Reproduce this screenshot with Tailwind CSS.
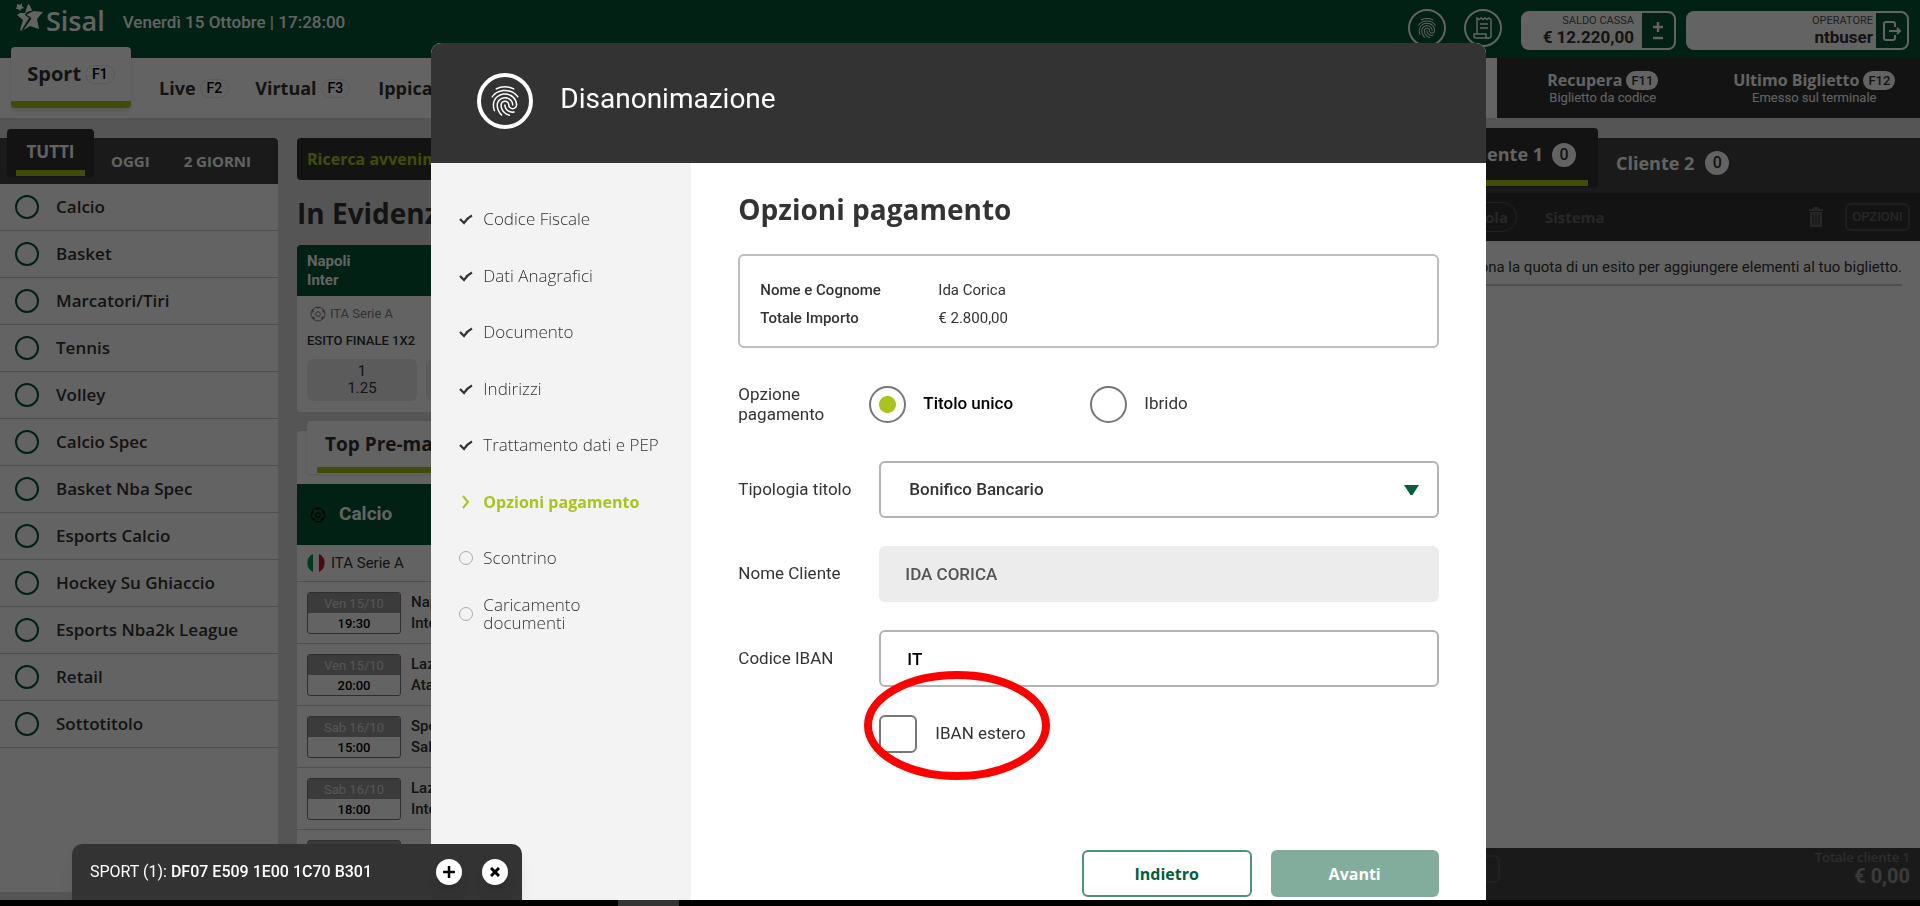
<!DOCTYPE html>
<html lang="it">
<head>
<meta charset="utf-8">
<meta name="viewport" content="width=device-width, initial-scale=1">
<title>Sisal - Disanonimazione</title>
<script src="https://cdn.jsdelivr.net/npm/@tailwindcss/browser@4"></script>
</head>
<body class="h-screen overflow-hidden bg-black font-['Roboto',sans-serif] text-[#333]">
<svg class="hidden" aria-hidden="true">
  <symbol id="finger" viewBox="0 0 24 24"><path fill="currentColor" d="M17.81 4.47c-.08 0-.16-.02-.23-.06C15.66 3.42 14 3 12.01 3c-1.98 0-3.86.47-5.57 1.41-.24.13-.54.04-.68-.2-.13-.24-.04-.55.2-.68C7.82 2.52 9.86 2 12.01 2c2.13 0 3.99.47 6.03 1.52.25.13.34.43.21.67-.09.18-.26.28-.44.28zM3.5 9.72c-.1 0-.2-.03-.29-.09-.23-.16-.28-.47-.12-.7.99-1.4 2.25-2.5 3.75-3.27C9.98 4.04 14 4.03 17.15 5.65c1.5.77 2.76 1.86 3.75 3.25.16.22.11.54-.12.7-.23.16-.54.11-.7-.12-.9-1.26-2.04-2.25-3.39-2.94-2.87-1.47-6.54-1.47-9.4.01-1.36.7-2.5 1.7-3.4 2.96-.08.14-.23.21-.39.21zm6.25 12.07c-.13 0-.26-.05-.35-.15-.87-.87-1.34-1.43-2.01-2.64-.69-1.23-1.05-2.73-1.05-4.34 0-2.97 2.54-5.39 5.66-5.39s5.66 2.42 5.66 5.39c0 .28-.22.5-.5.5s-.5-.22-.5-.5c0-2.42-2.09-4.39-4.66-4.39-2.57 0-4.66 1.97-4.66 4.39 0 1.44.32 2.77.93 3.85.64 1.15 1.08 1.64 1.85 2.42.19.2.19.51 0 .71-.11.1-.24.15-.37.15zm7.17-1.85c-1.19 0-2.24-.3-3.1-.89-1.49-1.01-2.38-2.65-2.38-4.39 0-.28.22-.5.5-.5s.5.22.5.5c0 1.41.72 2.74 1.94 3.56.71.48 1.54.71 2.54.71.24 0 .64-.03 1.04-.1.27-.05.53.13.58.41.05.27-.13.53-.41.58-.57.11-1.07.12-1.21.12zM14.91 22c-.04 0-.09-.01-.13-.02-1.59-.44-2.63-1.03-3.72-2.1-1.4-1.39-2.17-3.24-2.17-5.22 0-1.62 1.38-2.94 3.08-2.94 1.7 0 3.08 1.32 3.08 2.94 0 1.07.93 1.94 2.08 1.94s2.08-.87 2.08-1.94c0-3.77-3.25-6.83-7.25-6.83-2.84 0-5.44 1.58-6.61 4.03-.39.81-.59 1.76-.59 2.8 0 .78.07 2.01.67 3.61.1.26-.03.55-.29.64-.26.1-.55-.04-.64-.29-.49-1.31-.73-2.61-.73-3.96 0-1.2.23-2.29.68-3.24 1.33-2.79 4.28-4.6 7.51-4.6 4.55 0 8.25 3.51 8.25 7.83 0 1.62-1.38 2.94-3.08 2.94s-3.08-1.32-3.08-2.94c0-1.07-.93-1.94-2.08-1.94s-2.08.87-2.08 1.94c0 1.71.66 3.31 1.87 4.51.95.94 1.86 1.46 3.27 1.85.27.07.42.35.35.61-.05.23-.26.38-.47.38z"/></symbol>
  <symbol id="ball" viewBox="0 0 16 16"><g fill="none" stroke="currentColor"><circle cx="8" cy="8" r="7"/><path d="M8 5.500l2.500 1.800-1 2.900h-3l-1-2.900z"/></g><path fill="currentColor" d="M5.500 1.300L8 2.800l2.500-1.500zM1 6l2 .8L4 4 2.500 3.500zM15 6l-2 .8L12 4l1.500-.5zM3 13l2.500-.5L4 10.500 1.800 11zM13 13l-2.500-.5L12 10.500l2.200.5z"/></symbol>
  <symbol id="tick" viewBox="0 0 14 14"><path d="M1 7l4 4q3-5 8-7.500" fill="none" stroke="currentColor" stroke-width="2.200"/></symbol>
</svg>

<div class="flex h-full flex-col pb-[6px]">
  <header class="flex h-[58px] shrink-0 items-start bg-[#005533] pr-[11px] text-white">
    <div class="flex items-center gap-[18px] pl-4">
      <a href="#" class="flex h-[42px] items-center gap-[2px] font-['Open_Sans',sans-serif] text-[27px] font-semibold text-white">
        <svg class="mb-[6px] h-[30px] w-[28px]" viewBox="0 0 28 30"><path fill="currentColor" d="M12 1q2 0 4 7-6 0-7 4l4 3-8 13-1-1 3-10L1 12l3-2h5zM17 8l10 1-6 7 2 10-9-3-8 5 9-12-5-4zM1 1l3 1 2-2v3l2 2-3 1-1 2-2-2-2 0 1-3z"/><path d="M17 8q-5 0-7 4l5 3-8 12" fill="none" stroke="#005533"/></svg>Sisal</a>
      <p class="pt-[4px] text-[17px] font-medium">Venerdì 15 Ottobre | 17:28:00</p>
    </div>
    <div class="ml-auto flex pt-[9px]">
      <button class="flex size-[38px] items-center justify-center rounded-full border-2 border-white" aria-label="Disanonimazione"><svg class="size-[24px]"><use href="#finger"/></svg></button>
      <button class="ml-[18px] flex size-[38px] items-center justify-center rounded-full border-2 border-white" aria-label="Scontrino"><svg class="size-[24px]" viewBox="0 0 24 24" fill="none" stroke="currentColor" stroke-width="1.500"><path d="M6 18V2l2 1.500L10 2l2 1.500L14 2l2 1.500L18 2l2 1.500V20a2 2 0 0 1-2 2H5a2 2 0 0 1-2-2v-2h12v2a2 2 0 0 0 3 2M9 8h8M9 12h8"/></svg></button>
      <div class="mt-[2px] ml-[19px] flex h-[39px] w-[155px] overflow-hidden rounded-lg border-2 border-white bg-white">
        <div class="flex-1 pr-2 text-right text-[#333]"><p class="text-[11px] leading-[15px] text-[#555]">SALDO CASSA</p><p class="text-[17px] leading-[18px] font-bold">€ 12.220,00</p></div>
        <button class="flex w-[32px] items-center justify-center bg-[#005533]" aria-label="Saldo"><svg class="h-[20px] w-[12px]" viewBox="0 0 12 20" stroke="white" stroke-width="2.500"><path d="M6 1v10M1 6h10M1 17h10"/></svg></button>
      </div>
      <div class="mt-[2px] ml-[10px] flex h-[39px] w-[223px] overflow-hidden rounded-lg border-2 border-white bg-white">
        <div class="flex-1 pr-[3px] text-right text-[#333]"><p class="text-[11px] leading-[15px] text-[#555]">OPERATORE</p><p class="text-[17px] leading-[18px] font-bold">ntbuser</p></div>
        <button class="flex w-[31px] items-center justify-center bg-[#005533]" aria-label="Esci"><svg class="size-[20px]" viewBox="0 0 20 20" fill="none" stroke="white" stroke-width="2"><path d="M13 6V3a2 2 0 0 0-2-2H4a2 2 0 0 0-2 2v14a2 2 0 0 0 2 2h7a2 2 0 0 0 2-2v-3M7 10h11M15 7l3 3-3 3"/></svg></button>
      </div>
    </div>
  </header>

  <nav class="flex h-[60px] shrink-0 bg-white font-['Open_Sans',sans-serif] text-[18px] font-bold shadow-md">
    <a href="#" class="z-10 -mt-[11px] ml-[11px] flex h-[61px] w-[120px] items-center justify-center gap-1 rounded-[4px] border-b-[7px] border-[#a9c41c] bg-white text-[20px] shadow-md">Sport <kbd class="rounded-full border border-gray-200 px-[6px] font-['Roboto',sans-serif] text-[14px] leading-[17px] font-medium text-black">F1</kbd></a>
    <a href="#" class="ml-7 flex items-center gap-1">Live <kbd class="rounded-full border border-gray-200 px-[6px] font-['Roboto',sans-serif] text-[14px] leading-[17px] font-medium text-black">F2</kbd></a>
    <a href="#" class="ml-[26px] flex items-center gap-1">Virtual <kbd class="rounded-full border border-gray-200 px-[6px] font-['Roboto',sans-serif] text-[14px] leading-[17px] font-medium text-black">F3</kbd></a>
    <a href="#" class="ml-7 flex items-center">Ippica</a>
    <div class="ml-auto flex w-[423px] bg-[#333] text-white">
      <a href="#" class="flex flex-1 flex-col items-center pt-3"><span class="flex items-center gap-1 text-[16px] leading-[20px]">Recupera <kbd class="rounded-full bg-white px-[5px] font-['Roboto',sans-serif] text-[13px] leading-[19px] font-medium text-[#333]">F11</kbd></span><span class="font-['Roboto',sans-serif] text-[13px] leading-[15px] font-normal">Biglietto da codice</span></a>
      <a href="#" class="flex flex-1 flex-col items-center pt-3"><span class="flex items-center gap-1 text-[16px] leading-[20px]">Ultimo Biglietto <kbd class="rounded-full bg-white px-[5px] font-['Roboto',sans-serif] text-[13px] leading-[19px] font-medium text-[#333]">F12</kbd></span><span class="font-['Roboto',sans-serif] text-[13px] leading-[15px] font-normal">Emesso sul terminale</span></a>
    </div>
  </nav>

  <div class="flex min-h-0 flex-1 gap-[19px] bg-[#dadada] pt-5">
    <aside class="mb-2 w-[278px] shrink-0 bg-white font-['Open_Sans',sans-serif]">
      <div class="flex h-[46px] rounded-tr bg-[#454545] text-[15px] font-bold text-white">
        <button class="-mt-[9px] ml-[7px] h-[48px] w-[87px] rounded bg-[#333] px-[9px] pt-2 shadow"><span class="block border-b-[6px] border-[#a9c41c] pb-1 text-[17px] leading-[28px]">TUTTI</span></button>
        <button class="ml-[17px]">OGGI</button>
        <button class="ml-[34px]">2 GIORNI</button>
      </div>
      <ul class="text-[17px] leading-[20px] font-semibold">
        <li class="flex h-[47px] items-center gap-[17px] border-b border-[#ccc] pl-[15px]"><span class="size-[24px] rounded-full border-2 border-[#005533]"></span>Calcio</li>
        <li class="flex h-[47px] items-center gap-[17px] border-b border-[#ccc] pl-[15px]"><span class="size-[24px] rounded-full border-2 border-[#005533]"></span>Basket</li>
        <li class="flex h-[47px] items-center gap-[17px] border-b border-[#ccc] pl-[15px]"><span class="size-[24px] rounded-full border-2 border-[#005533]"></span>Marcatori/Tiri</li>
        <li class="flex h-[47px] items-center gap-[17px] border-b border-[#ccc] pl-[15px]"><span class="size-[24px] rounded-full border-2 border-[#005533]"></span>Tennis</li>
        <li class="flex h-[47px] items-center gap-[17px] border-b border-[#ccc] pl-[15px]"><span class="size-[24px] rounded-full border-2 border-[#005533]"></span>Volley</li>
        <li class="flex h-[47px] items-center gap-[17px] border-b border-[#ccc] pl-[15px]"><span class="size-[24px] rounded-full border-2 border-[#005533]"></span>Calcio Spec</li>
        <li class="flex h-[47px] items-center gap-[17px] border-b border-[#ccc] pl-[15px]"><span class="size-[24px] rounded-full border-2 border-[#005533]"></span>Basket Nba Spec</li>
        <li class="flex h-[47px] items-center gap-[17px] border-b border-[#ccc] pl-[15px]"><span class="size-[24px] rounded-full border-2 border-[#005533]"></span>Esports Calcio</li>
        <li class="flex h-[47px] items-center gap-[17px] border-b border-[#ccc] pl-[15px]"><span class="size-[24px] rounded-full border-2 border-[#005533]"></span>Hockey Su Ghiaccio</li>
        <li class="flex h-[47px] items-center gap-[17px] border-b border-[#ccc] pl-[15px]"><span class="size-[24px] rounded-full border-2 border-[#005533]"></span>Esports Nba2k League</li>
        <li class="flex h-[47px] items-center gap-[17px] border-b border-[#ccc] pl-[15px]"><span class="size-[24px] rounded-full border-2 border-[#005533]"></span>Retail</li>
        <li class="flex h-[47px] items-center gap-[17px] border-b border-[#ccc] pl-[15px]"><span class="size-[24px] rounded-full border-2 border-[#005533]"></span>Sottotitolo</li>
      </ul>
    </aside>

    <main class="flex min-w-0 flex-1 flex-col overflow-hidden">
      <input type="search" aria-label="Ricerca avvenimento" placeholder="Ricerca avvenimento" class="h-[42px] shrink-0 rounded bg-[#333] px-[10px] font-['Open_Sans',sans-serif] text-[16px] font-bold placeholder:text-[#a9c41c]">
      <h1 class="flex h-[65px] shrink-0 items-center font-['Open_Sans',sans-serif] text-[28px] font-bold">In Evidenza</h1>
      <section class="w-[480px] shrink-0 overflow-hidden rounded bg-white pb-[11px]">
        <div class="bg-[#005533] px-[10px] pt-[7px] pb-[6px] text-[15px] leading-[19px] font-bold text-white">Napoli<br>Inter</div>
        <p class="flex h-[35px] items-center gap-1 pl-[13px] text-[13px] text-[#808080]"><svg class="size-4"><use href="#ball"/></svg>ITA Serie A</p>
        <p class="px-[10px] text-[13px] leading-[20px] font-medium">ESITO FINALE 1X2</p>
        <div class="mt-2 flex gap-[9px] px-[10px] text-[15px] leading-[17px]">
          <button class="h-[42px] w-[110px] rounded-md bg-[#ebebeb]">1<br>1.25</button>
          <button class="h-[42px] w-[110px] rounded-md bg-[#ebebeb]">X<br>3.10</button>
        </div>
      </section>
      <section class="mt-[19px] shrink-0 rounded-t bg-white">
        <div class="flex h-[53px] px-[10px]"><button class="-mt-[10px] h-[53px] rounded bg-white px-[10px] font-['Open_Sans',sans-serif] text-[19px] font-bold shadow"><span class="block border-b-[6px] border-[#a9c41c] px-2 pb-2 pt-2">Top Pre-match</span></button></div>
        <h2 class="flex h-[61px] items-center gap-[13px] bg-[#005533] px-[13px] text-[19px] font-bold text-white"><svg class="size-4 text-black"><use href="#ball"/></svg>Calcio</h2>
        <h3 class="flex h-[37px] items-center gap-[5px] border-b border-[#ccc] pl-[9px] text-[15px]"><svg class="h-[18px] w-[20px]" viewBox="0 0 20 18"><path fill="#009246" d="M7 0A10 10 0 0 0 7 18z"/><path fill="#ce1130" d="M13 0a10 10 0 0 1 0 18z"/></svg>ITA Serie A</h3>
        <div class="flex h-[62px] items-center gap-[10px] border-b border-[#ccc] pl-[10px] text-[15px] leading-[21px] font-medium"><div class="w-[94px] overflow-hidden rounded-[3px] border border-[#777] text-center text-[13px] font-normal text-black"><p class="h-[20px] bg-[#999] leading-[22px] text-[#ddd]">Ven 15/10</p><p class="h-[20px] leading-[22px] font-medium">19:30</p></div><p>Napoli<br>Inter</p></div>
        <div class="flex h-[62px] items-center gap-[10px] border-b border-[#ccc] pl-[10px] text-[15px] leading-[21px] font-medium"><div class="w-[94px] overflow-hidden rounded-[3px] border border-[#777] text-center text-[13px] font-normal text-black"><p class="h-[20px] bg-[#999] leading-[22px] text-[#ddd]">Ven 15/10</p><p class="h-[20px] leading-[22px] font-medium">20:00</p></div><p>Lazio<br>Atalanta</p></div>
        <div class="flex h-[62px] items-center gap-[10px] border-b border-[#ccc] pl-[10px] text-[15px] leading-[21px] font-medium"><div class="w-[94px] overflow-hidden rounded-[3px] border border-[#777] text-center text-[13px] font-normal text-black"><p class="h-[20px] bg-[#999] leading-[22px] text-[#ddd]">Sab 16/10</p><p class="h-[20px] leading-[22px] font-medium">15:00</p></div><p>Spezia<br>Salernitana</p></div>
        <div class="flex h-[62px] items-center gap-[10px] border-b border-[#ccc] pl-[10px] text-[15px] leading-[21px] font-medium"><div class="w-[94px] overflow-hidden rounded-[3px] border border-[#777] text-center text-[13px] font-normal text-black"><p class="h-[20px] bg-[#999] leading-[22px] text-[#ddd]">Sab 16/10</p><p class="h-[20px] leading-[22px] font-medium">18:00</p></div><p>Lazio<br>Inter</p></div>
        <div class="flex h-[62px] items-center pl-[10px]"><div class="h-[42px] w-[94px] rounded-[3px] border border-[#777] bg-[#999]"></div></div>
      </section>
    </main>

    <aside class="flex w-[498px] shrink-0 flex-col bg-white font-['Open_Sans',sans-serif]">
      <div class="flex h-[55px] shrink-0 bg-[#454545] text-[18px] font-bold text-white">
        <button class="-mt-[10px] ml-4 h-[59px] w-[160px] rounded bg-[#333] px-[10px] shadow"><span class="flex h-[57px] items-center justify-end gap-[9px] border-b-[6px] border-[#a9c41c] pr-3">Cliente 1 <span class="size-[24px] rounded-full bg-white font-['Roboto',sans-serif] text-[16px] leading-[24px] font-medium text-[#333]">0</span></span></button>
        <button class="ml-[18px] flex items-center gap-[11px] pb-[5px]">Cliente 2 <span class="size-[24px] rounded-full bg-white font-['Roboto',sans-serif] text-[16px] leading-[24px] font-medium text-[#333]">0</span></button>
      </div>
      <div class="flex h-[48px] shrink-0 items-center bg-[#333] pr-[10px] text-[15px] font-bold text-[#666]">
        <button class="ml-[10px] h-[30px] w-[85px] rounded-full border border-[#555] pr-2 text-right">Singola</button>
        <button class="ml-7">Sistema</button>
        <svg class="mr-[22px] ml-auto h-[20px] w-[14px]" viewBox="0 0 14 20" fill="currentColor"><path d="M1 5h12v15H1zM0 2h4l1-2h4l1 2h4v2H0z"/><path d="M4 7v11M7 7v11M10 7v11" stroke="#333"/></svg>
        <button class="h-[28px] w-[65px] rounded-md border-2 border-[#4d4d4d] font-['Roboto',sans-serif] text-[13px] font-medium">OPZIONI</button>
      </div>
      <p class="mr-[18px] ml-[10px] border-b-2 border-[#ccc] pt-[17px] pb-[7px] text-right font-['Roboto',sans-serif] text-[15px] leading-[19px] whitespace-nowrap">Seleziona la quota di un esito per aggiungere elementi al tuo biglietto.</p>
      <footer class="mt-auto flex h-[52px] shrink-0 justify-between bg-[#454545] px-[10px] text-[#777]">
        <button class="mt-[7px] h-[28px] w-[68px] rounded-md border-2 border-[#555] font-['Roboto',sans-serif] text-[13px]">GIOCA</button>
        <p class="text-right text-[13px] leading-[19px] font-semibold">Totale cliente 1<br><span class="font-['Roboto',sans-serif] text-[20px] font-bold text-[#999]">€ 0,00</span></p>
      </footer>
    </aside>
  </div>
</div>

<div class="fixed inset-x-0 top-0 bottom-[6px] z-20 flex justify-center bg-black/61 pt-[43px] pr-[3px]">
  <section role="dialog" aria-labelledby="dlg-title" class="flex w-[55%] flex-col overflow-hidden rounded-t-[10px] bg-white">
    <header class="flex h-[120px] shrink-0 items-center gap-[27px] bg-[#333] pl-[46px] text-white">
      <span class="mb-1 flex size-[56px] items-center justify-center rounded-full border-4 border-white"><svg class="size-[36px]"><use href="#finger"/></svg></span>
      <h2 id="dlg-title" class="pb-[9px] text-[28px] leading-[34px]">Disanonimazione</h2>
    </header>
    <div class="flex min-h-0 flex-1">
      <ol class="flex w-[260px] shrink-0 flex-col bg-[#f3f3f3] pt-7 pl-7 font-['Open_Sans',sans-serif] text-[17px] leading-[18px] font-light">
        <li class="flex h-[56px] items-center gap-[10px]"><svg class="size-[14px]"><use href="#tick"/></svg>Codice Fiscale</li>
        <li class="flex h-[57px] items-center gap-[10px]"><svg class="size-[14px]"><use href="#tick"/></svg>Dati Anagrafici</li>
        <li class="flex h-[56px] items-center gap-[10px]"><svg class="size-[14px]"><use href="#tick"/></svg>Documento</li>
        <li class="flex h-[57px] items-center gap-[10px]"><svg class="size-[14px]"><use href="#tick"/></svg>Indirizzi</li>
        <li class="flex h-[56px] items-center gap-[10px] whitespace-nowrap"><svg class="size-[14px]"><use href="#tick"/></svg>Trattamento dati e PEP</li>
        <li class="flex h-[57px] items-center gap-[10px] text-[16px] font-bold text-[#a9c41c]" aria-current="step"><svg class="size-[14px]" viewBox="0 0 14 14" fill="none" stroke="currentColor" stroke-width="2"><path d="M4 1l5 6-5 6"/></svg>Opzioni pagamento</li>
        <li class="flex h-[56px] items-center gap-[10px]"><span class="size-[14px] rounded-full border border-[#aaa]"></span>Scontrino</li>
        <li class="flex h-[56px] items-center gap-[10px]"><span class="size-[14px] rounded-full border border-[#aaa]"></span><span>Caricamento<br>documenti</span></li>
      </ol>
      <form class="flex min-w-0 flex-1 flex-col pt-[27px] pr-[47px] pb-[3px] pl-[47px] text-[17px]">
        <h3 class="font-['Open_Sans',sans-serif] text-[28px] leading-[38px] font-bold">Opzioni pagamento</h3>
        <dl class="mt-[26px] grid h-[94px] grid-cols-[178px_1fr] content-center rounded-md border-2 border-[#bdbdbd] px-5 pt-[6px] text-[15px] leading-[28px]">
          <dt class="font-medium">Nome e Cognome</dt><dd>Ida Corica</dd>
          <dt class="font-medium">Totale Importo</dt><dd>€ 2.800,00</dd>
        </dl>
        <fieldset class="mt-9 flex h-[40px] items-center">
          <legend class="sr-only">Opzione pagamento</legend>
          <span class="w-[131px] leading-[20px]">Opzione<br>pagamento</span>
          <input id="unico" type="radio" name="opzione" checked class="size-[37px] appearance-none rounded-full border-2 border-[#777] bg-white checked:bg-[radial-gradient(circle,#a9c41c_8px,white_9px)]">
          <label for="unico" class="w-[184px] pl-[17px] font-medium text-black">Titolo unico</label>
          <input id="ibrido" type="radio" name="opzione" class="size-[37px] appearance-none rounded-full border-2 border-[#777] bg-white checked:bg-[radial-gradient(circle,#a9c41c_8px,white_9px)]">
          <label for="ibrido" class="pl-[17px]">Ibrido</label>
        </fieldset>
        <div class="mt-[37px] grid grid-cols-[141px_1fr] items-center gap-y-7">
          <label for="tipo">Tipologia titolo</label>
          <div class="relative"><select id="tipo" class="block h-[57px] w-full appearance-none rounded-md border-2 border-[#b3b3b3] bg-white pl-7 font-medium"><option>Bonifico Bancario</option></select><svg class="pointer-events-none absolute top-[23px] right-5 h-[12px] w-[15px]" viewBox="0 0 15 12"><path fill="#005f3a" d="M0 1h15L8.500 11h-2z"/></svg></div>
          <label for="nome">Nome Cliente</label>
          <input id="nome" value="IDA CORICA" disabled class="h-[56px] rounded-md bg-[#ececec] pl-[26px] font-medium text-[#555]">
          <label for="iban">Codice IBAN</label>
          <input id="iban" value="IT" class="h-[57px] rounded-md border-2 border-[#b3b3b3] pl-[26px] font-medium text-black">
          <div class="relative col-start-2 flex items-center gap-[18px]">
            <input id="estero" type="checkbox" class="size-[38px] appearance-none rounded-md border-2 border-[#777]"><label for="estero">IBAN estero</label>
            <svg class="pointer-events-none absolute -top-[44px] -left-[15px] h-[109px] w-[186px]" viewBox="0 0 186 109"><ellipse cx="93" cy="54.500" rx="89" ry="50.500" fill="none" stroke="#f00" stroke-width="8"/></svg>
          </div>
        </div>
        <div class="mt-auto flex justify-end gap-[19px] font-['Open_Sans',sans-serif] text-[16px] font-bold">
          <button type="button" class="h-[47px] w-[170px] rounded-md border-2 border-[#4d917a] bg-white text-[#005f3a]">Indietro</button>
          <button type="button" class="h-[47px] w-[168px] rounded-md bg-[#82ac9b] text-white">Avanti</button>
        </div>
      </form>
    </div>
  </section>
</div>

<aside class="fixed bottom-[6px] left-[72px] z-30 flex h-[56px] w-[450px] items-center rounded-t-[10px] bg-[#333] pr-[14px] pl-[18px] text-[16px] text-white shadow-lg">
  <p class="mr-auto">SPORT (1): <strong class="font-medium">DF07 E509 1E00 1C70 B301</strong></p>
  <button class="mr-5 flex size-[26px] items-center justify-center rounded-full bg-white shadow-lg" aria-label="Aggiungi"><svg class="size-[12px]" viewBox="0 0 12 12" stroke="black" stroke-width="2.500"><path d="M6 0v12M0 6h12"/></svg></button>
  <button class="flex size-[26px] items-center justify-center rounded-full bg-white shadow-lg" aria-label="Chiudi"><svg class="size-[10px]" viewBox="0 0 10 10" stroke="black" stroke-width="3"><path d="M1 1l8 8M9 1l-8 8"/></svg></button>
</aside>
<div class="fixed bottom-0 left-[618px] h-[6px] w-[61px] bg-[#333]"></div>
</body>
</html>
